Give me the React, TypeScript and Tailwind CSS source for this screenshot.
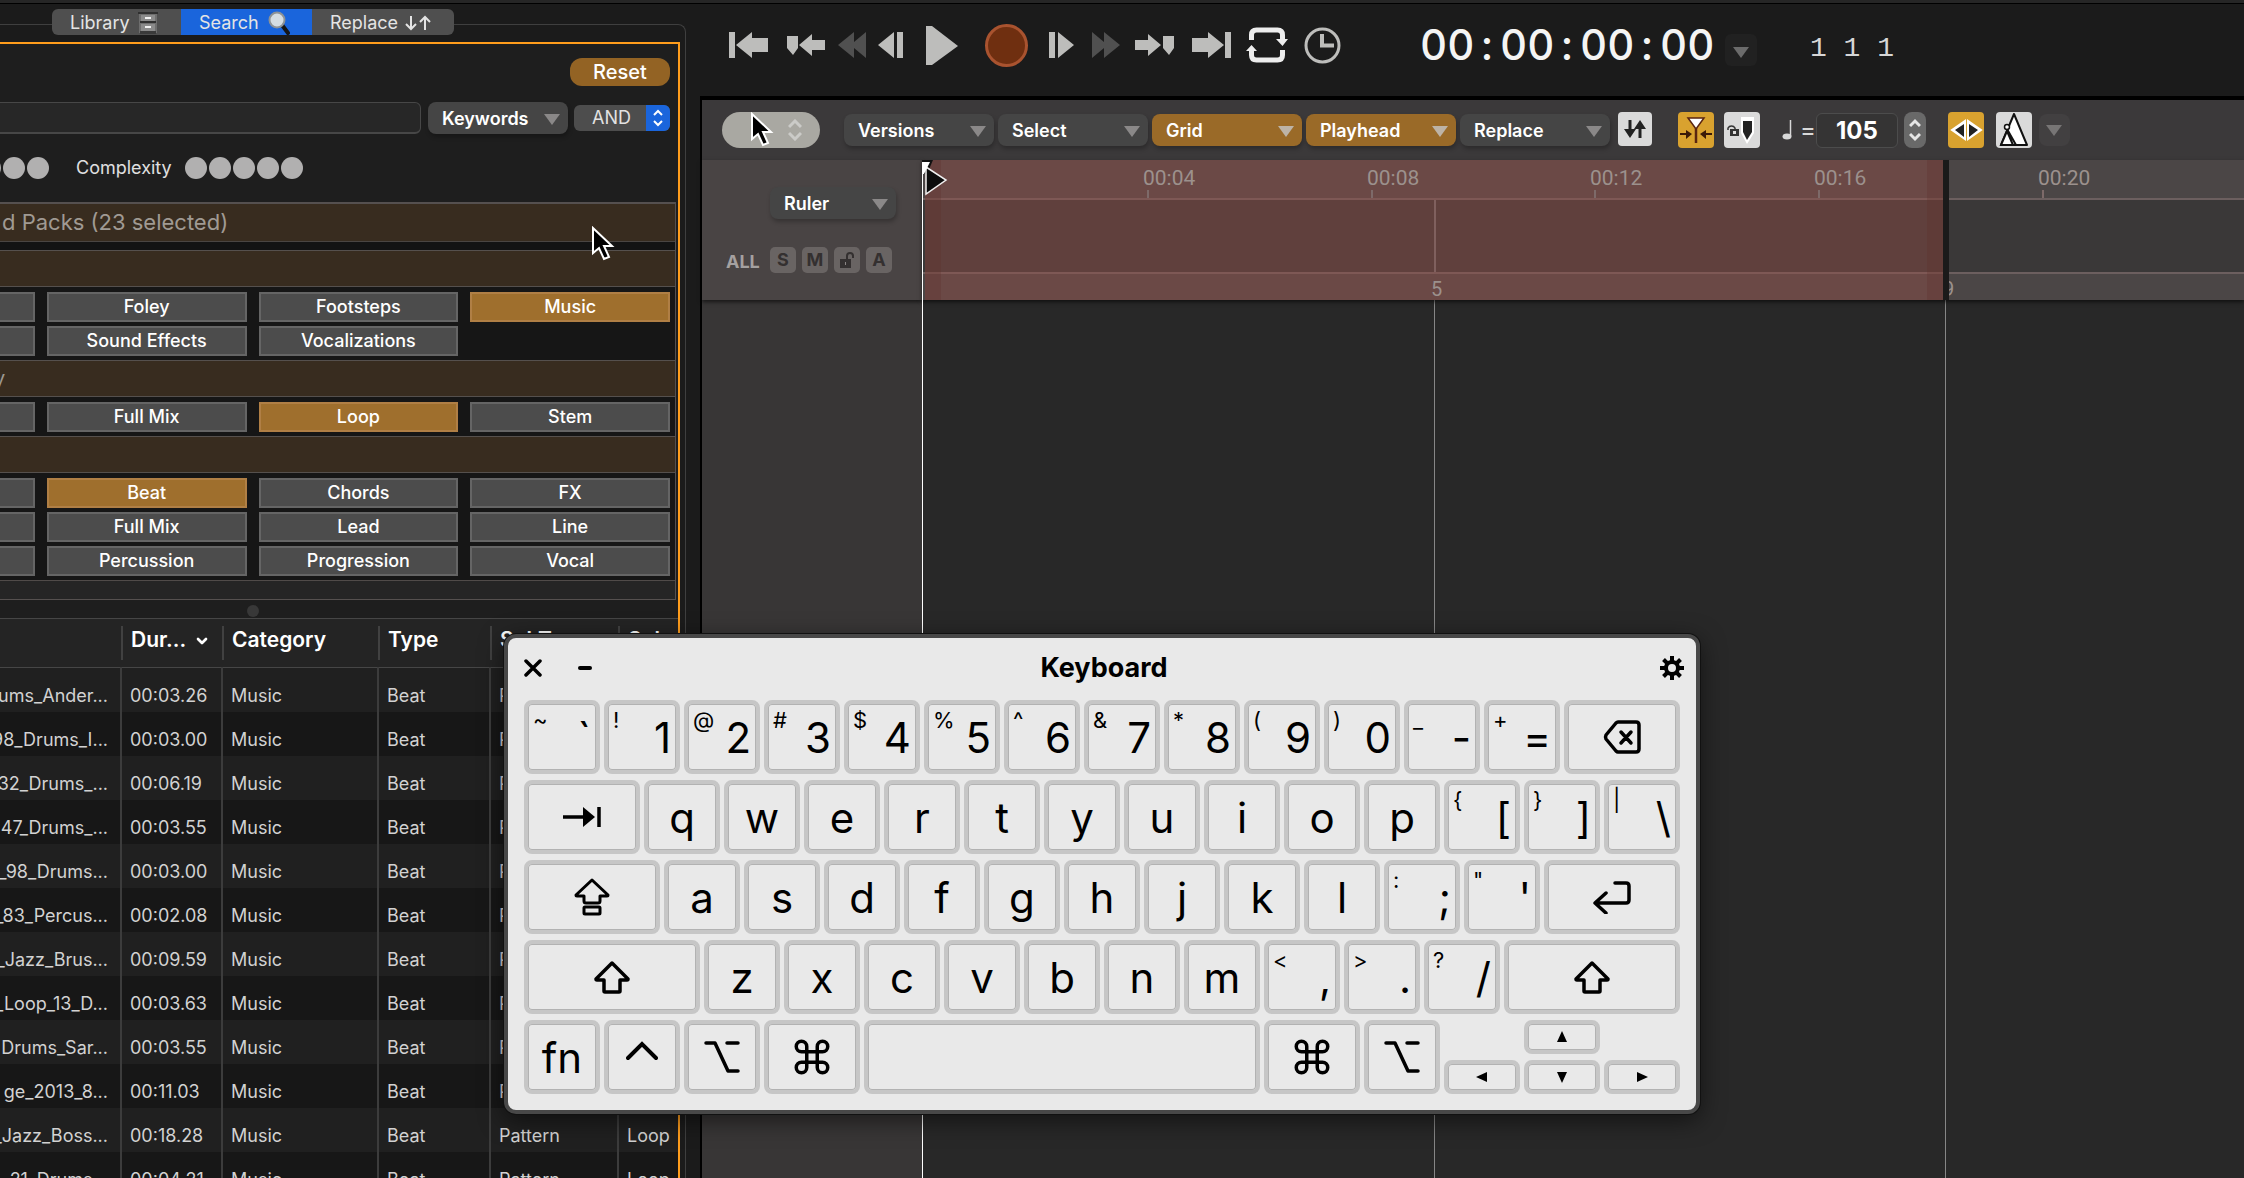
import type { ReactNode } from 'react';
import { clsx } from 'clsx';
import { ChevronDown, Command } from 'lucide-react';

const FILTERS = [
  {
    title: 'Category',
    tail: '',
    tags: ['Ambience', 'Foley', 'Footsteps', 'Music', 'Production', 'Sound Effects', 'Vocalizations'],
    active: 'Music',
  },
  { title: 'Music Category', tail: 'y', tags: ['Cue', 'Full Mix', 'Loop', 'Stem'], active: 'Loop' },
  {
    title: 'Type',
    tail: '',
    tags: [
      'Bass', 'Beat', 'Chords', 'FX',
      'Fill', 'Full Mix', 'Lead', 'Line',
      'Pad', 'Percussion', 'Progression', 'Vocal',
    ],
    active: 'Beat',
  },
];

const FILES = [
  { name: 'ums_Ander...', duration: '00:03.26' },
  { name: '98_Drums_I...', duration: '00:03.00' },
  { name: '32_Drums_...', duration: '00:06.19' },
  { name: '47_Drums_...', duration: '00:03.55' },
  { name: '_98_Drums...', duration: '00:03.00' },
  { name: '_83_Percus...', duration: '00:02.08' },
  { name: '_Jazz_Brus...', duration: '00:09.59' },
  { name: '_Loop_13_D...', duration: '00:03.63' },
  { name: 'Drums_Sar...', duration: '00:03.55' },
  { name: 'ge_2013_8...', duration: '00:11.03' },
  { name: '_Jazz_Boss...', duration: '00:18.28' },
  { name: '21_Drums...', duration: '00:04.21' },
];

const TICKS = [
  { label: '00:04', left: 225 },
  { label: '00:08', left: 449 },
  { label: '00:12', left: 672 },
  { label: '00:16', left: 896 },
  { label: '00:20', left: 1120 },
];

/* ---------- shared bits ---------- */

function Triangle({ className }: { className?: string }) {
  return (
    <svg viewBox="0 0 16 11" aria-hidden="true" className={clsx('h-[11px] w-4', className)}>
      <path d="M0 0h16L8 11z" fill="currentColor" />
    </svg>
  );
}

function Cursor({ className }: { className?: string }) {
  return (
    <svg viewBox="0 0 24 36" aria-hidden="true" className={clsx('h-9 w-6', className)}>
      <path d="M2 2v25l6-5 5 11 5-2-5-11h8z" fill="#000" stroke="#fff" strokeWidth="2" />
    </svg>
  );
}

function Dropdown({ label, className, active }: { label: string; className: string; active?: boolean }) {
  return (
    <div
      className={clsx(
        'relative h-8 shrink-0 rounded-lg shadow-[1px_3px_4px_rgba(0,0,0,0.25)]',
        active ? 'bg-[#9a6a28]' : 'bg-[#454545]',
        className,
      )}
    >
      <select
        aria-label={label}
        className="h-full w-full appearance-none bg-transparent pt-0.5 pl-[14px] text-lg font-semibold text-white outline-none"
      >
        <option>{label}</option>
      </select>
      <Triangle
        className={clsx('pointer-events-none absolute top-3 right-2', active ? 'text-[#bdb3a6]' : 'text-[#8a8888]')}
      />
    </div>
  );
}

function Dots({ label }: { label: string }) {
  return (
    <div className="flex gap-0.5" role="group" aria-label={label}>
      {[1, 2, 3, 4, 5].map((n) => (
        <button key={n} type="button" aria-label={`${label} ${n}`} className="size-[22px] rounded-full bg-[#b1b0b0]" />
      ))}
    </div>
  );
}

/* ---------- browser (left) ---------- */

function Tabs() {
  return (
    <div className="relative z-10 ml-[52px] flex h-[26px] w-[402px] shrink-0 overflow-hidden rounded-md bg-[#4f4f4f] text-lg text-[#e4e4e4]">
      <button type="button" className="flex w-[129px] items-center gap-2 pt-0.5 pl-[18px]">
        Library
        <svg viewBox="0 0 20 22" aria-hidden="true" className="h-[22px] w-5">
          <path d="M1 0h18v21H1z" fill="#6e6e6e" />
          <path d="M0 0h20v2H0zM2 9h16v2H2z" fill="#303030" />
          <path d="M3 3h14v6H3zM3 12h14v7H3z" fill="#8b8b8b" />
          <path d="M7 5h6v2H7zM7 14h6v2H7z" fill="#f2f2f2" />
          <path d="M2 19h16v3H2z" fill="#3a3a3a" />
        </svg>
      </button>
      <button type="button" className="flex w-[131px] items-center gap-2 bg-[#1a65dc] pt-0.5 pl-[18px]">
        Search
        <svg viewBox="0 0 24 24" aria-hidden="true" className="h-6 w-6">
          <path d="M15 14l6 8" stroke="#161616" strokeWidth="4" strokeLinecap="round" />
          <circle cx="10" cy="9" r="7.5" fill="#d5dde2" stroke="#8d9296" strokeWidth="2" />
        </svg>
      </button>
      <button type="button" className="flex flex-1 items-center gap-1.5 pt-0.5 pl-[18px]">
        Replace
        <svg viewBox="0 0 28 16" aria-hidden="true" className="h-4 w-7" fill="none" stroke="currentColor" strokeWidth="2">
          <path d="M7 1v13M2 9l5 5 5-5M21 15V2M16 7l5-5 5 5" />
        </svg>
      </button>
    </div>
  );
}

function FilterSection({ tail, tags, active }: { tail: string; tags: string[]; active: string }) {
  return (
    <section className="overflow-hidden bg-[#161616]">
      <h3 className="h-[37px] border-y border-[#55504d] bg-[#382c1f]">
        <span className="-ml-1.5 block text-xl leading-[34px] text-[#9d9891]">{tail}</span>
      </h3>
      <div className="-ml-[165px] mr-[5px] grid grid-cols-4 gap-x-3 gap-y-1 pt-[5px] pb-1">
        {tags.map((tag, i) => (
          <button
            key={tag}
            type="button"
            className={clsx(
              'h-[30px] border-2 text-lg leading-6 font-medium text-white',
              tag === active ? 'border-[#b07f45] bg-[#9f6f2d]' : 'border-[#656565] bg-[#4c4c4c]',
              i % 4 === 0 && 'text-left',
            )}
          >
            {tag}
          </button>
        ))}
      </div>
    </section>
  );
}

function FileTable() {
  return (
    <div className="min-h-0 flex-1 overflow-hidden border-t border-[#464646]">
      <table className="w-full table-fixed border-collapse text-lg text-[#d2d2d2]">
        <colgroup>
          <col className="w-[121px]" />
          <col className="w-[101px]" />
          <col className="w-[156px]" />
          <col className="w-[112px]" />
          <col className="w-[128px]" />
          <col />
        </colgroup>
        <thead>
          <tr className="h-12 border-b border-[#464646] bg-[#242424] text-left text-[21px] text-white">
            <th className="p-0" aria-label="Name" />
            {['Dur...', 'Category', 'Type', 'SubType', 'Sub'].map((title, i) => (
              <th key={title} className="p-0 font-semibold">
                <div className="flex h-[34px] items-center justify-between overflow-hidden border-l-2 border-[#414141] pr-3 pb-1 pl-2">
                  {title}
                  {i === 0 && <ChevronDown className="h-4 w-4 shrink-0" strokeWidth={4} />}
                </div>
              </th>
            ))}
          </tr>
        </thead>
        <tbody>
          {FILES.map((file) => (
            <tr key={file.name} className="h-11 bg-[#202020] even:bg-[#171717]">
              <td className="p-0 pt-3">
                <div className="flex justify-end overflow-hidden pr-3 leading-8 whitespace-nowrap">{file.name}</div>
              </td>
              {[file.duration, 'Music', 'Beat', 'Pattern', 'Loop'].map((value) => (
                <td key={value} className="border-l-2 border-[#3c3c3c] p-0 pt-3 pl-2 leading-8">
                  {value}
                </td>
              ))}
            </tr>
          ))}
        </tbody>
      </table>
    </div>
  );
}

function Browser() {
  return (
    <aside className="flex w-[700px] shrink-0 flex-col overflow-hidden pt-[5px]">
      <Tabs />
      <div className="-mt-[11px] mr-[14px] flex min-h-0 flex-1 flex-col rounded-tr-lg border-t border-r border-[#3f3f3f] pt-[17px] pr-[5px]">
        <div className="flex min-h-0 flex-1 flex-col border-t-2 border-r-2 border-[#ff9d1c] bg-[#1e1e1e]">
          <div className="flex shrink-0 justify-end pt-[14px] pr-2">
            <button type="button" className="h-7 w-[100px] rounded-[12px] bg-[#936324] text-xl leading-7 font-medium text-white">
              Reset
            </button>
          </div>
          <div className="mt-4 flex shrink-0 items-center pr-2">
            <input
              type="text"
              aria-label="Search"
              className="-ml-1 h-8 min-w-0 flex-1 rounded-r-md border border-b-2 border-[#474747] bg-[#272727] px-3 text-lg text-white outline-none"
            />
            <Dropdown label="Keywords" className="ml-[7px] w-[140px]" />
            <div className="relative ml-1.5 h-[26px] w-24 overflow-hidden rounded-md bg-[#4d4d4d]">
              <select
                aria-label="Match"
                className="h-full w-full appearance-none bg-transparent pl-[18px] text-lg leading-6 text-[#e2e2e2] outline-none"
              >
                <option>AND</option>
                <option>OR</option>
              </select>
              <span className="pointer-events-none absolute top-0 right-0 flex h-full w-6 items-center justify-center bg-[#1a65dc] text-white">
                <svg viewBox="0 0 12 18" aria-hidden="true" className="h-[18px] w-3" fill="none" stroke="currentColor" strokeWidth="2">
                  <path d="M2 6l4-4 4 4M2 12l4 4 4-4" />
                </svg>
              </span>
            </div>
          </div>
          <div className="mt-[23px] -ml-[69px] flex h-[22px] shrink-0 items-center text-lg leading-6 text-[#e0e0e0]">
            <Dots label="Intensity" />
            <span className="mr-3 ml-[27px] w-[97px]">Complexity</span>
            <Dots label="Complexity" />
          </div>

          <div className="mt-[23px] mr-0.5 flex h-[398px] shrink-0 flex-col border-t-2 border-r border-b border-[#55504f] bg-[#252525]">
            <h2 className="h-[38px] border-b border-[#4a4542] bg-[#382c1f] pl-0.5 text-[22px] leading-9 text-[#a09a93]">
              d Packs (23 selected)
            </h2>
            <div className="h-2 bg-[#131313]" />
            {FILTERS.map((section) => (
              <FilterSection key={section.title} tail={section.tail} tags={section.tags} active={section.active} />
            ))}
            <div className="flex-1 border-t border-[#504b49]" />
          </div>
          <div className="flex h-[18px] shrink-0 items-center pt-1 pl-[247px]">
            <span className="size-3 rounded-full bg-[#383838]" />
          </div>
          <FileTable />
        </div>
      </div>
    </aside>
  );
}

/* ---------- transport ---------- */

const TRANSPORT: { label: string; size: string; view: string; tone?: string; icon: ReactNode }[] = [
  {
    label: 'Go to start',
    size: 'ml-[29px] h-[26px] w-[39px]',
    view: '0 0 39 26',
    icon: <path d="M0 0h6v26H0zM7 13L23 0v6h16v14H23v6z" />,
  },
  {
    label: 'Previous marker',
    size: 'ml-[19px] h-6 w-[38px]',
    view: '0 0 38 24',
    icon: <path d="M0 3h11v12l-5 7-6-7zM12 12L25 1v6h13v10H25v6z" />,
  },
  {
    label: 'Rewind',
    size: 'ml-[13px] h-[26px] w-7',
    view: '0 0 28 26',
    tone: 'text-[#505050]',
    icon: <path d="M0 13L16 0v10L28 0v26L16 16v10z" />,
  },
  {
    label: 'Step back',
    size: 'ml-3 h-[26px] w-[25px]',
    view: '0 0 25 26',
    icon: <path d="M0 13L16 0v26zM19 0h6v26h-6z" />,
  },
  { label: 'Play', size: 'ml-[23px] h-[39px] w-8', view: '0 0 32 39', icon: <path d="M0 0h6l26 20L6 39H0z" /> },
  {
    label: 'Record',
    size: 'ml-[27px] h-[43px] w-[43px]',
    view: '0 0 43 43',
    icon: <circle cx="21.5" cy="21.5" r="20" fill="#6f2f10" stroke="#a9532f" strokeWidth="3" />,
  },
  {
    label: 'Step forward',
    size: 'ml-[21px] h-[26px] w-[25px]',
    view: '0 0 25 26',
    icon: <path d="M25 13L9 0v26zM0 0h6v26H0z" />,
  },
  {
    label: 'Fast forward',
    size: 'ml-[18px] h-[26px] w-7',
    view: '0 0 28 26',
    tone: 'text-[#505050]',
    icon: <path d="M28 13L12 0v10L0 0v26l12-10v10z" />,
  },
  {
    label: 'Next marker',
    size: 'ml-[15px] h-6 w-[39px]',
    view: '0 0 39 24',
    icon: <path d="M0 7h13V1l13 11-13 11v-6H0zM28 3h11v12l-5 7-6-7z" />,
  },
  {
    label: 'Go to end',
    size: 'ml-[18px] h-[26px] w-[39px]',
    view: '0 0 39 26',
    icon: <path d="M0 6h16V0l16 13-16 13v-6H0zM33 0h6v26h-6z" />,
  },
  {
    label: 'Loop',
    size: 'ml-[15px] h-9 w-[42px]',
    view: '0 0 42 36',
    tone: 'text-[#ededed]',
    icon: (
      <>
        <path
          d="M5.500 13V8q0-5 5-5h21q5 0 5 5v6M36.500 23v5q0 5-5 5h-21q-5 0-5-5v-7"
          fill="none"
          stroke="currentColor"
          strokeWidth="5"
        />
        <path d="M30 12h12l-5.500 7zM0 24h11l-5.500-6z" />
      </>
    ),
  },
  {
    label: 'Clock',
    size: 'ml-[16px] h-[37px] w-[37px]',
    view: '0 0 37 37',
    icon: (
      <g fill="none" stroke="currentColor" strokeWidth="3">
        <circle cx="18.500" cy="18.500" r="16.500" />
        <path d="M18 7v11.500h12" strokeWidth="4" />
      </g>
    ),
  },
];

function Transport() {
  return (
    <div className="flex h-[92px] shrink-0 items-center pb-[10px] text-[#bdbdbb]">
      {TRANSPORT.map(({ label, size, view, tone, icon }) => (
        <button key={label} type="button" aria-label={label} className={clsx('shrink-0', size, tone)}>
          <svg viewBox={view} fill="currentColor" className="h-full w-full">
            {icon}
          </svg>
        </button>
      ))}
      <time className="ml-[79px] flex w-[294px] shrink-0 text-[42px] leading-10 font-medium text-[#f4f4f4] tabular-nums">
        {'00:00:00:00'.split(/(:)/).map((part, i) => (
          <span key={i} className={part === ':' ? 'w-[26px] text-center' : 'w-[54px] text-center'}>
            {part}
          </span>
        ))}
      </time>
      <button type="button" aria-label="Time format" className="mt-2.5 ml-[11px] flex h-8 w-8 shrink-0 items-center justify-center rounded-md bg-[#212121] pt-1">
        <Triangle className="text-[#6b6b6b]" />
      </button>
      <span className="mt-2 ml-[53px] font-['Liberation_Mono',monospace] text-[28px] leading-8 whitespace-pre text-[#d6d6d6]">
        1 1 1
      </span>
    </div>
  );
}

/* ---------- editor toolbar ---------- */

function IconButton({ label, active, children }: { label: string; active?: boolean; children: ReactNode }) {
  return (
    <button
      type="button"
      aria-label={label}
      className={clsx('h-9 w-9 shrink-0 rounded', active ? 'bg-[#d9a22f]' : 'bg-[#dadada]')}
    >
      <svg viewBox="0 0 36 36" className="h-full w-full">
        {children}
      </svg>
    </button>
  );
}

function Toolbar() {
  return (
    <div className="flex h-[60px] shrink-0 items-center bg-[#3b393a] pl-5">
      <button type="button" aria-label="Pointer tool" className="flex h-9 w-[98px] shrink-0 items-center justify-between rounded-full bg-[#a9a8a2] pr-[18px] pl-7">
        <Cursor />
        <svg viewBox="0 0 14 22" aria-hidden="true" className="h-[22px] w-3.5" fill="none" stroke="#cbcbc8" strokeWidth="3">
          <path d="M1 8l6-6 6 6M1 14l6 6 6-6" />
        </svg>
      </button>
      <div className="ml-6 flex gap-1">
        <Dropdown label="Versions" className="w-[150px]" />
        <Dropdown label="Select" className="w-[150px]" />
        <Dropdown label="Grid" className="w-[150px]" active />
        <Dropdown label="Playhead" className="w-[150px]" active />
        <Dropdown label="Replace" className="w-[150px]" />
      </div>
      <button type="button" aria-label="Swap" className="mr-[26px] mb-0.5 ml-2 size-[34px] shrink-0 rounded bg-[#dadada]">
        <svg viewBox="0 0 34 34" className="h-full w-full">
          <path d="M12 8v12M22 26V14" stroke="#222" strokeWidth="3" />
          <path d="M6 17h12l-6 9zM16 17h12l-6-9z" fill="#222" />
        </svg>
      </button>
      <div className="flex gap-[10px]">
        <IconButton label="Snap to playhead" active>
          <path d="M18 15v16" stroke="#5a2510" strokeWidth="2.500" />
          <path d="M10 6h16l-8 11z" fill="#fff" stroke="#5a2510" strokeWidth="1.500" />
          <path d="M2 21h6v-3l6 4-6 5v-4H2zM34 21h-6v-3l-6 4 6 5v-4h6z" fill="#3a1a08" />
        </IconButton>
        <IconButton label="Lock markers">
          <path d="M17 5h13v16l-7 11-6-11z" fill="#fff" />
          <path d="M19 9h9v11l-5 8-4-8z" fill="#222" />
          <path d="M4 18v-2a4 4 0 0 1 7 0v2" fill="none" stroke="#333" strokeWidth="1.500" />
          <path d="M6 17h9v7H6z" fill="#333" />
          <path d="M9 19h3v3H9z" fill="#ddd" />
        </IconButton>
      </div>
      <label htmlFor="tempo" className="ml-[22px] flex items-center gap-2 text-[24px] leading-8 text-[#d8d8d8]">
        <svg viewBox="0 0 10 20" aria-label="Quarter note" className="h-5 w-2.5">
          <path d="M8.500 0v16" stroke="currentColor" strokeWidth="1.500" />
          <ellipse cx="5" cy="16.500" rx="4.500" ry="3" fill="currentColor" />
        </svg>
        =
      </label>
      <input
        id="tempo"
        type="text"
        defaultValue="105"
        className="h-[35px] w-[82px] rounded-md border border-[#4c4c4c] bg-[#353434] pt-0.5 text-center text-[24px] font-bold text-white outline-none"
      />
      <button type="button" aria-label="Tempo stepper" className="ml-1.5 flex h-9 w-[22px] shrink-0 items-center justify-center rounded-lg bg-[#696969]">
        <svg viewBox="0 0 12 24" aria-hidden="true" className="h-6 w-3" fill="none" stroke="#e6e6e6" strokeWidth="3">
          <path d="M1 8l5-5 5 5M1 16l5 5 5-5" />
        </svg>
      </button>
      <div className="ml-[22px] flex gap-3">
        <IconButton label="Link selection" active>
          <path d="M17 9v18L4 18zM20 9v18l13-9z" fill="#fff" stroke="#fff" strokeWidth="2" />
          <path d="M16 12v13l-9-7zM21 12v13l9-7z" fill="#222" />
        </IconButton>
        <IconButton label="Metronome">
          <path d="M18 2L5 33h26z" fill="#fff" stroke="#111" strokeWidth="2" strokeLinejoin="round" />
          <path d="M11 17l9 16M11 19L5 33h12z" fill="#fff" stroke="#111" strokeWidth="2" />
          <circle cx="11" cy="15" r="2.500" fill="#fff" stroke="#111" strokeWidth="1.500" />
        </IconButton>
      </div>
      <button type="button" aria-label="Metronome options" className="ml-[7px] flex h-8 w-[31px] shrink-0 items-center justify-center rounded-lg bg-[#424041]">
        <Triangle className="text-[#777575]" />
      </button>
    </div>
  );
}

/* ---------- timeline ---------- */

function TrackButton({ label, children }: { label: string; children: ReactNode }) {
  return (
    <button
      type="button"
      aria-label={label}
      className="flex size-[26px] items-center justify-center rounded-[5px] bg-[#696463] text-lg leading-6 font-bold text-[#343030]"
    >
      {children}
    </button>
  );
}

function RulerHeader() {
  return (
    <div className="flex h-[140px] w-[220px] shrink-0 flex-col bg-[#494444] pt-[27px] shadow-[0_2px_4px_rgba(0,0,0,0.6)]">
      <Dropdown label="Ruler" className="ml-[68px] w-[126px]" />
      <div className="mt-[27px] flex items-center gap-1.5 pl-6">
        <span className="mt-1 w-[38px] text-lg leading-6 font-bold text-[#a5a1a0]">ALL</span>
        <TrackButton label="Solo all">S</TrackButton>
        <TrackButton label="Mute all">M</TrackButton>
        <TrackButton label="Lock all">
          <svg viewBox="0 0 16 18" aria-hidden="true" className="h-[18px] w-4">
            <path d="M8 8V5a3 3 0 0 1 6 0v2" fill="none" stroke="currentColor" strokeWidth="2" />
            <path d="M1 8h11v9H1z" fill="currentColor" />
            <path d="M6 11h1v3H6z" fill="#8a8584" />
          </svg>
        </TrackButton>
        <TrackButton label="Automation all">A</TrackButton>
      </div>
    </div>
  );
}

function Ruler() {
  return (
    <div className="relative h-[140px] min-w-0 flex-1 overflow-hidden text-[#9c918d] shadow-[0_2px_4px_rgba(0,0,0,0.6)]">
      <div className="h-[38px] bg-[#4b4646]" />
      <div className="h-[76px] border-y-2 border-[#6c5f5f] bg-[#3a3838]" />
      <div className="h-[26px] bg-[#4b4646]" />
      {/* loop range */}
      <div className="absolute inset-y-0 left-[3px] w-[1018px] border-x-[16px] border-[#5c2c2640] bg-[#9b4e4666]" />
      {TICKS.map(({ label, left }) => (
        <div key={label} className="absolute top-[6px]" style={{ left }}>
          <span className="-ml-1 block font-['Roboto',sans-serif] text-[21px] leading-6">{label}</span>
          <span className="block h-2 w-0.5 bg-[#7d6a69]" />
        </div>
      ))}
      <div className="absolute top-10 left-[512px] h-[72px] w-0.5 bg-[#80605e]" />
      <span className="absolute top-[117px] left-[509px] font-['Roboto',sans-serif] text-xl leading-6">5</span>
      <span className="absolute top-[117px] left-[1021px] font-['Roboto',sans-serif] text-xl leading-6">9</span>
      <div className="absolute inset-y-0 left-[1021px] w-1.5 bg-[#1b1a1a]" />
    </div>
  );
}

function Timeline() {
  return (
    <div className="relative flex min-h-0 flex-1 flex-col bg-[#282828]">
      <div className="z-10 flex">
        <RulerHeader />
        <Ruler />
      </div>
      <div className="flex min-h-0 flex-1">
        <div className="w-[220px] shrink-0 bg-[#383636]" />
        <div className="relative flex-1">
          <div className="absolute inset-y-0 left-[512px] w-px bg-[#868686]" />
          <div className="absolute inset-y-0 left-[1023px] w-px bg-[#868686]" />
        </div>
      </div>
      {/* playhead */}
      <div className="absolute inset-y-0 left-[220px] z-20 w-px bg-white" />
      <svg viewBox="0 0 28 36" aria-hidden="true" className="absolute top-0 left-[220px] z-20 h-9 w-7">
        <path d="M0 0h11L5 14H0z" fill="#111" />
        <path d="M4 7l20 13L4 34z" fill="#0c0c0c" stroke="#f0f0f0" strokeWidth="1.500" />
        <path d="M0 2h8L2 14H0z" fill="#fff" />
      </svg>
    </div>
  );
}

/* ---------- on-screen keyboard ---------- */

function Key({ main, shift, wide, children }: { main: string; shift?: string; wide?: string; children?: ReactNode }) {
  return (
    <button
      type="button"
      aria-label={main}
      className={clsx(
        'relative flex h-full min-w-0 items-center rounded-lg border-4 border-[#c6c6c6] bg-[#e9e9e9] text-[42px] leading-none text-black shadow-[inset_0_0_0_1px_#b2b2b2]',
        shift ? 'justify-between px-[5px]' : 'justify-center',
        wide,
      )}
    >
      {shift && <span className="self-start text-[22px] leading-8">{shift}</span>}
      {children ?? <span className="pt-0.5">{main}</span>}
    </button>
  );
}

function ShiftIcon() {
  return (
    <svg viewBox="0 0 38 34" aria-hidden="true" className="h-[34px] w-[38px]">
      <path
        d="M19 3L3 19q0 1 1 1h7v11q0 1 1 1h14q1 0 1-1V20h7q1 0 1-1z"
        fill="none"
        stroke="currentColor"
        strokeWidth="3.500"
        strokeLinejoin="round"
      />
    </svg>
  );
}

function OptionIcon() {
  return (
    <svg viewBox="0 0 36 34" aria-hidden="true" className="h-[34px] w-9" fill="none" stroke="currentColor" strokeWidth="3.500" strokeLinecap="round" strokeLinejoin="round">
      <path d="M2 3h9l13 28h10M23 3h11" />
    </svg>
  );
}

function CommandIcon() {
  return <Command className="size-[42px]" strokeWidth={2} aria-hidden="true" />;
}

const NUMBER_KEYS = [
  ['`', '~'], ['1', '!'], ['2', '@'], ['3', '#'], ['4', '$'], ['5', '%'], ['6', '^'],
  ['7', '&'], ['8', '*'], ['9', '('], ['0', ')'], ['-', '_'], ['=', '+'],
];

function Keyboard() {
  return (
    <section
      aria-label="Keyboard"
      className="absolute top-[634px] left-[504px] z-30 w-[1196px] rounded-xl border-4 border-[#484848] bg-[#e9e9e9] px-4 pb-4 text-black shadow-[0_0_0_1px_#111,0_6px_24px_rgba(0,0,0,0.55)]"
    >
      <header className="-mr-1 flex h-[62px] items-center justify-between pb-0.5">
        <div className="flex w-[100px] items-center gap-9">
          <button type="button" aria-label="Close">
            <svg viewBox="0 0 18 18" className="size-[18px]">
              <path d="M2 2l14 14M16 2L2 16" stroke="currentColor" strokeWidth="3.500" strokeLinecap="round" />
            </svg>
          </button>
          <button type="button" aria-label="Minimize" className="h-1 w-[14px] rounded-sm bg-black" />
        </div>
        <h1 className="text-[27px] leading-8 font-bold">Keyboard</h1>
        <div className="flex w-[100px] justify-end">
          <button type="button" aria-label="Settings">
            <svg viewBox="0 0 24 24" className="size-6" stroke="currentColor">
              <circle cx="12" cy="12" r="6" fill="none" strokeWidth="4" />
              <path d="M12 0v5M12 19v5M0 12h5M19 12h5M3.500 3.500L7 7M17 17l3.500 3.500M3.500 20.500L7 17M17 7l3.500-3.500" strokeWidth="4" />
            </svg>
          </button>
        </div>
      </header>

      <div className="flex flex-col gap-1.5">
        <div className="grid h-[74px] grid-cols-[repeat(13,76px)_1fr] gap-1">
          {NUMBER_KEYS.map(([main, shift]) => (
            <Key key={main} main={main} shift={shift} />
          ))}
          <Key main="delete">
            <svg viewBox="0 0 38 34" aria-hidden="true" className="h-[34px] w-[38px]" fill="none" stroke="currentColor" strokeWidth="3.500" strokeLinejoin="round" strokeLinecap="round">
              <path d="M15 2h18q3 0 3 3v24q0 3-3 3H15q-1 0-2-1L3 19q-1-2 0-4L13 3q1-1 2-1zM18 12l10 11M28 12L18 23" />
            </svg>
          </Key>
        </div>

        <div className="grid h-[74px] grid-cols-[116px_repeat(13,1fr)] gap-1">
          <Key main="tab">
            <svg viewBox="0 0 38 22" aria-hidden="true" className="h-[22px] w-[38px]">
              <path d="M0 11h24M36 1v20" stroke="currentColor" strokeWidth="3.500" />
              <path d="M20 1l12 10-12 10z" fill="currentColor" />
            </svg>
          </Key>
          {'qwertyuiop'.split('').map((letter) => (
            <Key key={letter} main={letter} />
          ))}
          <Key main="[" shift="{" />
          <Key main="]" shift="}" />
          <Key main="\" shift="|" />
        </div>

        <div className="grid h-[74px] grid-cols-[136px_repeat(11,76px)_1fr] gap-1">
          <Key main="caps lock">
            <svg viewBox="0 0 38 38" aria-hidden="true" className="h-[38px] w-[38px]" fill="none" stroke="currentColor" strokeWidth="3" strokeLinejoin="round">
              <path d="M19 2L3 17q0 1 1 1h7v5q0 2 2 2h12q2 0 2-2v-5h7q1 0 1-1zM12 29h14q1 0 1 1v5q0 1-1 1H12q-1 0-1-1v-5q0-1 1-1z" />
            </svg>
          </Key>
          {'asdfghjkl'.split('').map((letter) => (
            <Key key={letter} main={letter} />
          ))}
          <Key main=";" shift=":" />
          <Key main="'" shift={'"'} />
          <Key main="return">
            <svg viewBox="0 0 38 34" aria-hidden="true" className="h-[34px] w-[38px]" fill="none" stroke="currentColor" strokeWidth="3.500" strokeLinejoin="round" strokeLinecap="round">
              <path d="M22 3h11q3 0 3 3v14q0 3-3 3H3M13 13L2 23l11 10" />
            </svg>
          </Key>
        </div>

        <div className="grid h-[74px] grid-cols-[176px_repeat(10,76px)_1fr] gap-1">
          <Key main="shift">
            <ShiftIcon />
          </Key>
          {'zxcvbnm'.split('').map((letter) => (
            <Key key={letter} main={letter} />
          ))}
          <Key main="," shift="<" />
          <Key main="." shift=">" />
          <Key main="/" shift="?" />
          <Key main="right shift">
            <ShiftIcon />
          </Key>
        </div>

        <div className="grid h-[74px] grid-cols-[76px_76px_76px_96px_1fr_96px_76px_236px] gap-1">
          <Key main="fn" />
          <Key main="control" wide="pb-3">
            <svg viewBox="0 0 32 20" aria-hidden="true" className="h-5 w-8" fill="none" stroke="currentColor" strokeWidth="4" strokeLinecap="round">
              <path d="M2 17L16 3l14 14" />
            </svg>
          </Key>
          <Key main="option">
            <OptionIcon />
          </Key>
          <Key main="command">
            <CommandIcon />
          </Key>
          <Key main="space">{''}</Key>
          <Key main="right command">
            <CommandIcon />
          </Key>
          <Key main="right option">
            <OptionIcon />
          </Key>
          <div className="grid grid-cols-3 grid-rows-2 gap-x-1 gap-y-1.5">
            {[
              { label: 'up', d: 'M6 0l5 11H1z', cell: 'col-start-2' },
              { label: 'left', d: 'M0 6l11-5v10z', cell: 'col-start-1 row-start-2' },
              { label: 'down', d: 'M6 12l5-11H1z', cell: 'col-start-2 row-start-2' },
              { label: 'right', d: 'M12 6L1 1v10z', cell: 'col-start-3 row-start-2' },
            ].map(({ label, d, cell }) => (
              <Key key={label} main={label} wide={cell}>
                <svg viewBox="0 0 12 12" aria-hidden="true" className="size-3">
                  <path d={d} fill="currentColor" />
                </svg>
              </Key>
            ))}
          </div>
        </div>
      </div>
    </section>
  );
}

export default function App() {
  return (
    <div className="relative flex h-screen flex-col overflow-hidden bg-[#1b1b1b] font-['Inter',sans-serif] antialiased">
      <div className="h-1 shrink-0 border-b border-black bg-[#262626]" />
      <div className="flex min-h-0 flex-1">
        <Browser />
        <main className="flex min-w-0 flex-1 flex-col">
          <Transport />
          <div className="flex min-h-0 flex-1 flex-col border-t-4 border-l-2 border-black">
            <Toolbar />
            <Timeline />
          </div>
        </main>
      </div>
      <Cursor className="absolute top-[226px] left-[591px] z-20" />
      <Keyboard />
    </div>
  );
}
